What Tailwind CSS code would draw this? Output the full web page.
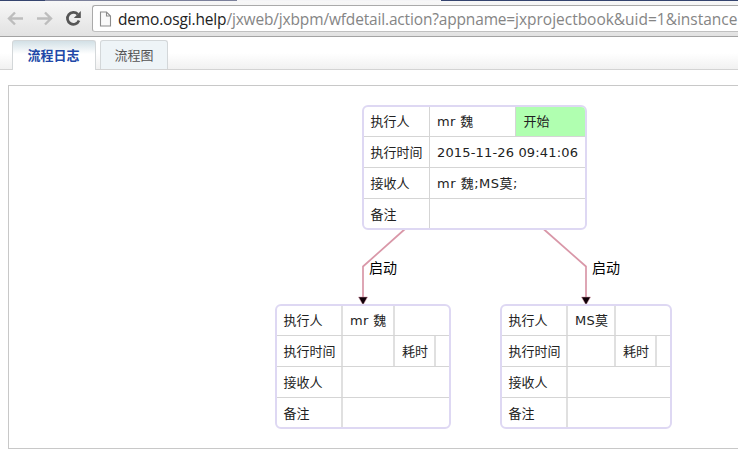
<!DOCTYPE html>
<html lang="zh-CN">
<head>
<meta charset="utf-8">
<title>流程日志</title>
<script src="https://cdn.jsdelivr.net/npm/@tailwindcss/browser@4"></script>
</head>
<body class="w-[738px] h-[449px] overflow-hidden bg-white font-['DejaVu_Sans','Noto_Sans_CJK_SC',sans-serif] text-[13px] text-[#222]">
<div class="flex flex-col w-[738px] h-[449px] overflow-hidden">
  <header class="relative h-[37px] shrink-0 flex items-start pt-[5px] bg-linear-to-b from-[#f8f8f8] to-[#e2e2e2] border-b border-[#a3a3a3]">
    <div class="absolute left-0 top-0 h-px w-full flex">
      <span class="w-[45px] bg-[#35446f]"></span><span class="w-[192px] bg-[#7c819b]"></span><span class="w-[204px] bg-[#f4f4f6]"></span><span class="flex-1 bg-[#35446f]"></span>
    </div>
    <svg class="w-[92px] h-[26px] shrink-0" viewBox="0 5 92 26" fill="none">
      <path d="M23 18.5H9M15 12.5l-6 6 6 6" stroke="#bdbdbd" stroke-width="2.4"/>
      <path d="M37 18.5h14M45 12.5l6 6-6 6" stroke="#bdbdbd" stroke-width="2.4"/>
      <path d="M77.8 14.2A6 6 0 1 0 79 20.6" stroke="#555" stroke-width="2.7"/>
      <path d="M80.8 11v7h-7z" fill="#555"/>
    </svg>
    <div class="flex-1 h-[27px] flex items-center bg-white border border-r-0 border-[#aaa] border-b-[#c0c0c0] rounded-l-[3px]">
      <svg class="w-[13px] h-[16px] ml-[6px] shrink-0" viewBox="0 0 13 16" fill="none" stroke="#8c8c8c" stroke-width="1.1"><path d="M1.5 1h6L11.5 5v10h-10zM7.5 1v4h4" fill="#fafafa"/></svg>
      <div class="ml-[6px] whitespace-nowrap font-['Open_Sans',sans-serif] text-[15.5px] tracking-[-.162px] leading-[24px] text-[#858585]"><span class="text-[#222]">demo.osgi.help</span>/jxweb/jxbpm/wfdetail.action?appname=<span class="tracking-[-.02px]">jxprojectbook&amp;uid=1&amp;instance</span></div>
    </div>
  </header>
  <nav class="h-[33px] shrink-0 flex items-end pl-[12px] gap-[4px] bg-linear-to-b from-white from-50% to-[#f1f1f1] border-b border-[#d3d3d3]">
    <div class="relative z-10 w-[84px] h-[30px] -mb-px flex items-center justify-center pr-px rounded-t-[3px] border border-b-0 border-[#d3d7d9] bg-linear-to-b from-[#d2e0e6] to-white to-45% font-bold text-[#2148a8]">流程日志</div>
    <div class="w-[68px] h-[29px] flex items-center justify-center pt-px rounded-t-[3px] border border-b-0 border-[#d3d7d9] bg-[#eef4f7] text-[#555]">流程图</div>
  </nav>
  <main class="relative mt-[15px] ml-[8px] h-[364px] border border-r-0 border-[#c8c8c8] bg-white">
    <svg class="absolute left-[-9px] top-[-86px]" width="738" height="449" fill="none">
      <g stroke="#d997a8" stroke-width="1.7"><path d="M405 229L363 266.500V297"/><path d="M543.500 229L586 266.500V297"/></g>
      <g fill="#100008" stroke="#d997a8" stroke-width=".5"><path d="M358.500 297h9l-4.500 8zM581.500 297h9l-4.500 8z"/></g>
    </svg>
    <div class="absolute left-[360px] top-[173px] text-[14px] leading-[18px] text-black">启动</div>
    <div class="absolute left-[583px] top-[173px] text-[14px] leading-[18px] text-black">启动</div>

    <section class="absolute left-[353px] top-[19px] w-[225px] h-[125px] grid grid-rows-[30px_31px_31px_29px] leading-[32px] whitespace-nowrap rounded-[6px] border-2 border-[#ded8f3] overflow-hidden">
      <div class="flex leading-[30px] border-b border-[#d5d5d5]"><div class="w-[66px] pl-[6.5px] border-r border-[#d5d5d5]">执行人</div><div class="w-[86px] pl-[7px] tracking-[.4px] border-r border-[#d5d5d5]">mr 魏</div><div class="flex-1 pl-[7.5px] bg-[#b0ffb0]">开始</div></div>
      <div class="flex border-b border-[#d5d5d5]"><div class="w-[66px] pl-[6.5px] border-r border-[#d5d5d5]">执行时间</div><div class="pl-[7px] tracking-[.16px]">2015-11-26 09:41:06</div></div>
      <div class="flex border-b border-[#d5d5d5]"><div class="w-[66px] pl-[6.5px] border-r border-[#d5d5d5]">接收人</div><div class="pl-[7px] tracking-[.5px]">mr 魏;MS莫;</div></div>
      <div class="flex"><div class="w-[66px] pl-[6.5px] border-r border-[#d5d5d5]">备注</div></div>
    </section>

    <section class="absolute left-[266px] top-[218px] w-[176px] h-[125px] grid grid-rows-[30px_31px_31px_29px] leading-[32px] whitespace-nowrap rounded-[6px] border-2 border-[#ded8f3] overflow-hidden">
      <div class="flex leading-[30px] border-b border-[#d5d5d5]"><div class="w-[66px] pl-[6.5px] border-r-2 border-[#e0e0e0]">执行人</div><div class="w-[52px] pl-[7px] tracking-[.4px] border-r-2 border-[#e0e0e0]">mr 魏</div></div>
      <div class="flex border-b border-[#d5d5d5]"><div class="w-[66px] pl-[6.5px] border-r-2 border-[#e0e0e0]">执行时间</div><div class="w-[52px] border-r-2 border-[#e0e0e0]"></div><div class="w-[41px] pl-[7px] border-r-2 border-[#e0e0e0]">耗时</div></div>
      <div class="flex border-b border-[#d5d5d5]"><div class="w-[66px] pl-[6.5px] border-r-2 border-[#e0e0e0]">接收人</div></div>
      <div class="flex"><div class="w-[66px] pl-[6.5px] border-r-2 border-[#e0e0e0]">备注</div></div>
    </section>

    <section class="absolute left-[491px] top-[218px] w-[172px] h-[125px] grid grid-rows-[30px_31px_31px_29px] leading-[32px] whitespace-nowrap rounded-[6px] border-2 border-[#ded8f3] overflow-hidden">
      <div class="flex leading-[30px] border-b border-[#d5d5d5]"><div class="w-[66px] pl-[6.5px] border-r-2 border-[#e0e0e0]">执行人</div><div class="w-[48px] pl-[7px] tracking-[.3px] border-r-2 border-[#e0e0e0]">MS莫</div></div>
      <div class="flex border-b border-[#d5d5d5]"><div class="w-[66px] pl-[6.5px] border-r-2 border-[#e0e0e0]">执行时间</div><div class="w-[48px] border-r-2 border-[#e0e0e0]"></div><div class="w-[41px] pl-[7px] border-r-2 border-[#e0e0e0]">耗时</div></div>
      <div class="flex border-b border-[#d5d5d5]"><div class="w-[66px] pl-[6.5px] border-r-2 border-[#e0e0e0]">接收人</div></div>
      <div class="flex"><div class="w-[66px] pl-[6.5px] border-r-2 border-[#e0e0e0]">备注</div></div>
    </section>
  </main>
</div>
</body>
</html>
